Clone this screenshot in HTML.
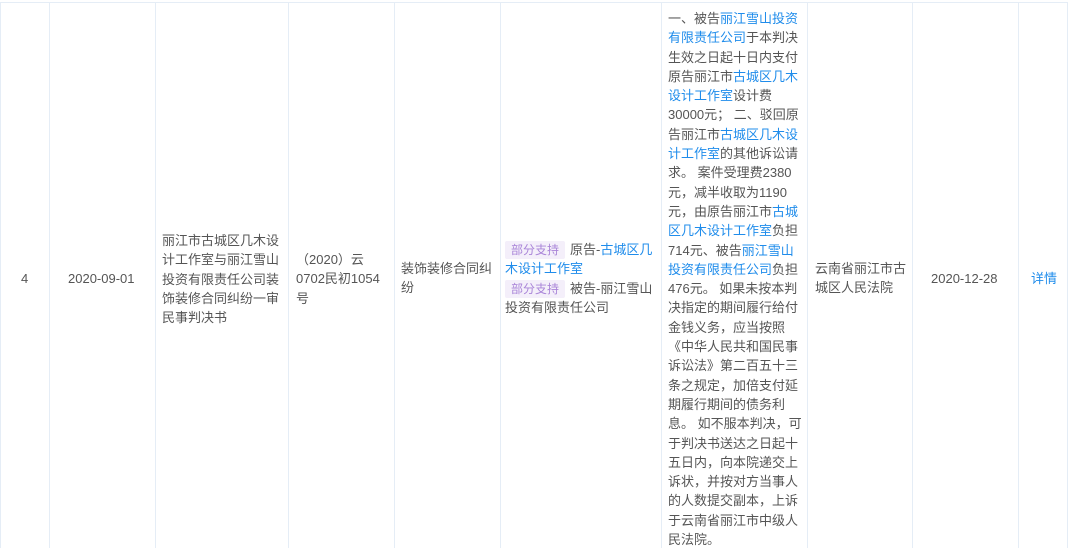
<!DOCTYPE html>
<html><head><meta charset="utf-8"><style>
body{margin:0;width:1080px;height:548px;overflow:hidden;background:#fff;font-family:"Liberation Sans","Noto Sans CJK SC",sans-serif;font-size:13px;color:#555;}
.v{position:absolute;top:2px;bottom:0;width:1px;background:#e5edf6;}
.h{position:absolute;left:0;width:1068px;height:1px;background:#e5edf6;top:2px;}
.t{position:absolute;line-height:19.3px;white-space:nowrap;}
a{color:#1f8ceb;text-decoration:none;}
.tag{display:inline-block;background:#f4effa;color:#a984d8;font-size:12px;line-height:18px;padding:0 6px;margin-right:5px;border-radius:2px;}
</style></head><body>
<div class="h"></div>
<div class="v" style="left:0"></div><div class="v" style="left:49px"></div><div class="v" style="left:155px"></div><div class="v" style="left:288px"></div><div class="v" style="left:394px"></div><div class="v" style="left:500px"></div><div class="v" style="left:661px"></div><div class="v" style="left:807px"></div><div class="v" style="left:912px"></div><div class="v" style="left:1018px"></div><div class="v" style="left:1067px"></div>
<div class="t" style="left:21px;top:269px">4</div>
<div class="t" style="left:68px;top:269px">2020-09-01</div>
<div class="t" style="left:162px;top:231px">丽江市古城区几木设<br>计工作室与丽江雪山<br>投资有限责任公司装<br>饰装修合同纠纷一审<br>民事判决书</div>
<div class="t" style="left:296px;top:250px">（2020）云<br>0702民初1054<br>号</div>
<div class="t" style="left:401px;top:259px">装饰装修合同纠<br>纷</div>
<div class="t" style="left:505px;top:240px"><span class="tag">部分支持</span>原告-<a>古城区几</a><br><a>木设计工作室</a><br><span class="tag">部分支持</span>被告-丽江雪山<br>投资有限责任公司</div>
<div class="t" style="left:668px;top:9px">一、被告<a>丽江雪山投资</a><br><a>有限责任公司</a>于本判决<br>生效之日起十日内支付<br>原告丽江市<a>古城区几木</a><br><a>设计工作室</a>设计费<br>30000元； 二、驳回原<br>告丽江市<a>古城区几木设</a><br><a>计工作室</a>的其他诉讼请<br>求。 案件受理费2380<br>元，减半收取为1190<br>元，由原告丽江市<a>古城</a><br><a>区几木设计工作室</a>负担<br>714元、被告<a>丽江雪山</a><br><a>投资有限责任公司</a>负担<br>476元。 如果未按本判<br>决指定的期间履行给付<br>金钱义务，应当按照<br>《中华人民共和国民事<br>诉讼法》第二百五十三<br>条之规定，加倍支付延<br>期履行期间的债务利<br>息。 如不服本判决，可<br>于判决书送达之日起十<br>五日内，向本院递交上<br>诉状，并按对方当事人<br>的人数提交副本，上诉<br>于云南省丽江市中级人<br>民法院。</div>
<div class="t" style="left:815px;top:259px">云南省丽江市古<br>城区人民法院</div>
<div class="t" style="left:931px;top:269px">2020-12-28</div>
<div class="t" style="left:1031px;top:269px"><a>详情</a></div>
</body></html>
